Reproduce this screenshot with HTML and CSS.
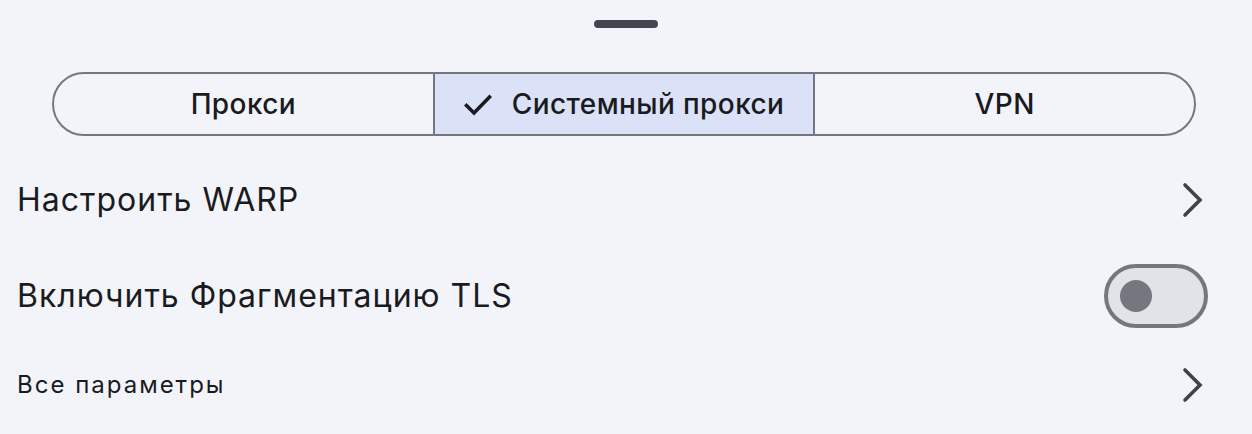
FILE: index.html
```html
<!DOCTYPE html>
<html lang="ru">
<head>
<meta charset="utf-8">
<link rel="stylesheet" href="styles.css">
</head>
<body>
<div class="sheet">
  <div class="handle-wrap"><div class="handle"></div></div>
  <div class="segmented">
    <div class="seg"><span class="seg-label">Прокси</span></div>
    <div class="seg seg-selected">
      <svg class="check" width="28" height="22" viewBox="0 0 28 22"><polyline points="2.5,11.5 10,19 25.5,3" fill="none" stroke="#1a1b21" stroke-width="3.6" stroke-linecap="square"/></svg>
      <span class="seg-label">Системный прокси</span>
    </div>
    <div class="seg"><span class="seg-label">VPN</span></div>
  </div>
  <div class="row row-1">
    <span class="title">Настроить WARP</span>
    <svg class="chev" width="22" height="36" viewBox="0 0 22 36"><polyline points="3,3 18,18 3,33" fill="none" stroke="#404149" stroke-width="3.6" stroke-linecap="round" stroke-linejoin="miter"/></svg>
  </div>
  <div class="row row-2">
    <span class="title">Включить Фрагментацию TLS</span>
    <div class="switch"><div class="thumb"></div></div>
  </div>
  <div class="row row-3">
    <span class="title small">Все параметры</span>
    <svg class="chev" width="22" height="36" viewBox="0 0 22 36"><polyline points="3,3 18,18 3,33" fill="none" stroke="#404149" stroke-width="3.6" stroke-linecap="round" stroke-linejoin="miter"/></svg>
  </div>
</div>
</body>
</html>
```
FILE: styles.css
```css
html, body {
  margin: 0;
  padding: 0;
  background: #f3f4f9;
}
body {
  font-family: Inter, "Noto Sans", sans-serif;
  color: #1a1b21;
  width: 1252px;
  height: 434px;
  overflow: hidden;
}
.sheet {
  display: flex;
  flex-direction: column;
}
.handle-wrap {
  display: flex;
  justify-content: center;
  padding-top: 20px;
}
.handle {
  width: 64px;
  height: 8px;
  border-radius: 4px;
  background: #45464f;
}
.segmented {
  margin-top: 44px;
  margin-left: 52px;
  width: 1144px;
  height: 64px;
  box-sizing: border-box;
  border: 2px solid #777680;
  border-radius: 32px;
  display: flex;
  overflow: hidden;
}
.seg {
  flex: 1 1 0;
  display: flex;
  align-items: center;
  justify-content: center;
  gap: 20px;
  font-size: 28px;
  font-weight: 500;
  letter-spacing: 0.4px;
  color: #1a1b21;
}
.seg + .seg {
  border-left: 2px solid #777680;
}
.seg-selected {
  background: #dbe1f6;
}
.check {
  display: block;
  margin-top: 1px;
}
.row {
  display: flex;
  align-items: center;
  justify-content: space-between;
  padding-left: 17px;
}
.row-1 {
  height: 96px;
  margin-top: 16px;
  padding-right: 48px;
}
.row-2 {
  height: 96px;
  padding-right: 44px;
}
.row-3 {
  height: 82px;
  padding-right: 48px;
}
.title {
  font-size: 32px;
  letter-spacing: 1px;
  line-height: 40px;
}
.title.small {
  font-size: 24px;
  letter-spacing: 2px;
  line-height: 32px;
}
.chev {
  display: block;
}
.switch {
  width: 104px;
  height: 64px;
  box-sizing: border-box;
  border: 4px solid #767680;
  border-radius: 32px;
  background: #e2e2e9;
  display: flex;
  align-items: center;
  padding-left: 12px;
}
.thumb {
  width: 32px;
  height: 32px;
  border-radius: 50%;
  background: #767680;
}
```
